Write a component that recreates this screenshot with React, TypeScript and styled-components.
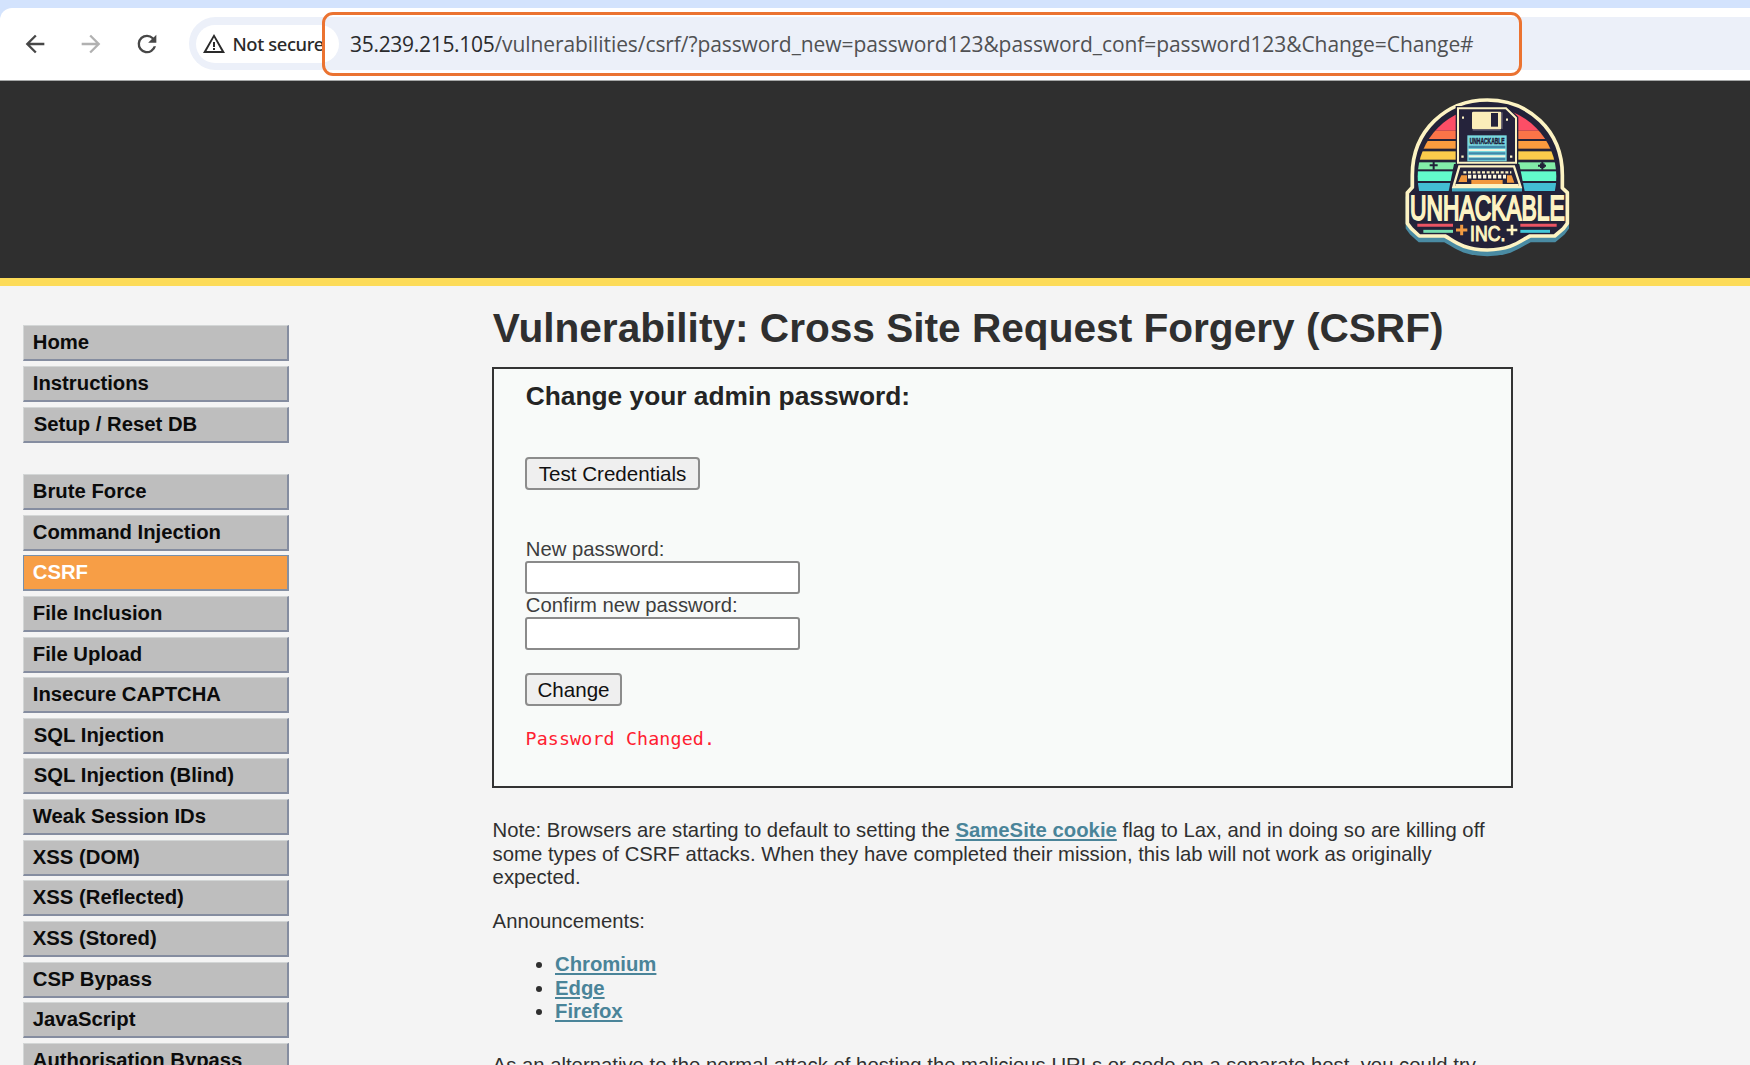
import React from "react";
import styled, { createGlobalStyle } from "styled-components";

const GlobalStyle = createGlobalStyle`
  *, *::before, *::after { box-sizing: border-box; }
  body {
    margin: 0;
    background: #f4f4f4;
    color: #2f2f2f;
    font-family: "Liberation Sans", Arial, sans-serif;
    font-size: 20.3px;
    line-height: 23.5px;
  }
`;

const Window = styled.div`
  width: 1750px;
  height: 1065px;
  overflow: hidden;
  display: flex;
  flex-direction: column;
`;

/* Browser chrome */

const Chrome = styled.div`
  position: relative;
  flex: none;
  height: 81px;
  padding-top: 8px;
  background: #d3e3fd;
`;

const Toolbar = styled.div`
  display: flex;
  align-items: center;
  height: 73px;
  padding-left: 20.5px;
  padding-bottom: 1px;
  background: #fff;
  border-bottom: 1px solid #a6a8a8;
  border-top-left-radius: 12px;
`;

const ToolButton = styled.button<{ $dim?: boolean }>`
  display: flex;
  width: 28px;
  height: 28px;
  margin: 0 28px 0 0;
  padding: 0;
  border: 0;
  background: none;
  color: ${(p) => (p.$dim ? "#b1b1b1" : "#474747")};
`;

const AddressBar = styled.div`
  flex: 1;
  display: flex;
  align-items: center;
  height: 53px;
  padding-left: 7px;
  background: #ecf0f9;
  border-radius: 26.5px 0 0 26.5px;
`;

const SecurityChip = styled.div`
  display: flex;
  align-items: center;
  gap: 6.5px;
  width: 143px;
  height: 38px;
  padding-left: 6.5px;
  border-radius: 19px;
  background: #fff;
  color: #2a2a2a;
  font: 500 18.4px/38px "Noto Sans", "Open Sans", sans-serif;
  letter-spacing: -0.4px;
  white-space: nowrap;
`;

const Url = styled.div`
  margin-left: 11.5px;
  font: 400 21px/38px "Open Sans", "Noto Sans", sans-serif;
  letter-spacing: -0.08px;
  color: #505153;
  white-space: nowrap;
`;

const Host = styled.span`
  color: #2a2b2d;
  letter-spacing: -0.3px;
`;

const Highlight = styled.div`
  position: absolute;
  left: 322px;
  top: 12px;
  width: 1200px;
  height: 64px;
  border: 3px solid #eb7331;
  border-radius: 11px;
`;

/* Page */

const Header = styled.header`
  flex: none;
  display: flex;
  justify-content: flex-end;
  height: 205px;
  padding: 14px 178px 0 0;
  background: #2f2f2f;
  border-bottom: 8px solid #fcdb58;
`;

const Body = styled.div`
  display: flex;
  align-items: flex-start;
`;

const Sidebar = styled.nav`
  flex: none;
  display: flex;
  flex-direction: column;
  gap: 31.2px;
  width: 266px;
  margin: 39.4px 0 0 23px;
`;

const MenuGroup = styled.ul`
  display: flex;
  flex-direction: column;
  gap: 4.67px;
  margin: 0;
  padding: 0;
  list-style: none;
`;

const MenuItem = styled.li<{ $active?: boolean; $shift?: boolean }>`
  height: 36px;
  padding: ${(p) => (p.$shift ? "5px 0 0 9.8px" : "5px 0 0 8.8px")};
  border-style: solid;
  border-width: 1px 2px 2px 1px;
  border-color: ${(p) => (p.$active ? "#7890ab #8590a3 #8590a3 #7890ab" : "#d3d6d6 #858da0 #858da0 #d3d6d6")};
  background: ${(p) => (p.$active ? "#f79e46" : "#bebebe")};
  color: ${(p) => (p.$active ? "#fff" : "#0b0b0b")};
  font-weight: 700;
  white-space: nowrap;
`;

const Content = styled.main`
  width: 1021px;
  margin: 19.2px 0 0 203px;
`;

const Title = styled.h1`
  margin: 0 0 16px;
  padding-left: 0.8px;
  font-size: 40.62px;
  line-height: 46px;
  white-space: nowrap;
`;

const Panel = styled.section`
  height: 421px;
  padding: 11.5px 0 0 31px;
  border: 2px solid #333;
  background: #f8faf9;
`;

const PanelTitle = styled.h3`
  margin: 0 0 46.5px;
  padding-left: 0.8px;
  color: #242424;
  font-size: 26.3px;
  line-height: 30px;
`;

const Button = styled.button<{ $width: number }>`
  display: block;
  width: ${(p) => p.$width}px;
  height: 33px;
  padding: 0;
  border: 2px solid #8c8c8c;
  border-radius: 4px;
  background: #efefef;
  color: #111;
  font: 400 20.6px/28px "Liberation Sans", Arial, sans-serif;
`;

const Fields = styled.div`
  margin: 47.5px 0 23.5px;
`;

const Label = styled.label`
  display: block;
  height: 23px;
  padding-left: 0.8px;
  color: #3d3d3d;
`;

const Input = styled.input`
  display: block;
  width: 275px;
  height: 33px;
  padding: 0 4px;
  border: 2px solid #8a8a8a;
  border-radius: 3px;
  background: #fff;
`;

const Result = styled.pre`
  margin: 21px 0 0;
  padding-left: 0.5px;
  color: #ff2030;
  font: 400 18.3px/24px "DejaVu Sans Mono", monospace;
  letter-spacing: 0.15px;
`;

const Paragraph = styled.p<{ $top: number }>`
  margin: ${(p) => p.$top}px 0 0;
  padding-left: 0.6px;
  letter-spacing: 0.012px;
`;

const Line = styled.span`
  display: block;
  white-space: nowrap;
`;

const Link = styled.a`
  color: #4a8499;
  font-weight: 700;
  text-decoration: underline;
  text-decoration-thickness: 2px;
  text-underline-offset: 2px;
`;

const Announcements = styled.ul`
  margin: 20px 0 0;
  padding-left: 63px;
`;

const topics = ["Home", "Instructions", "Setup / Reset DB"];
const labs = [
  "Brute Force", "Command Injection", "CSRF", "File Inclusion", "File Upload", "Insecure CAPTCHA",
  "SQL Injection", "SQL Injection (Blind)", "Weak Session IDs", "XSS (DOM)", "XSS (Reflected)",
  "XSS (Stored)", "CSP Bypass", "JavaScript", "Authorisation Bypass",
];

function Menu({ items, active }: { items: string[]; active?: string }) {
  return (
    <MenuGroup>
      {items.map((item) => (
        <MenuItem key={item} $active={item === active} $shift={item.startsWith("S")}>{item}</MenuItem>
      ))}
    </MenuGroup>
  );
}

function Icon({ d, size = 28 }: { d: string; size?: number }) {
  return <svg width={size} height={size} viewBox="0 0 24 24" fill="currentColor"><path d={d} /></svg>;
}

const stripes: [number, number, string][] = [
  [80, 72, "#fd4e66"], [152, 25, "#fb7448"], [183, 23, "#fb9b3e"], [214, 25, "#fccb4b"],
  [247, 21, "#82eda9"], [274, 29, "#62fbcb"], [309, 24, "#43bdd3"],
];

function Logo() {
  const badge =
    "M97 322 V285 C97 150 200 60 322 60 C444 60 547 150 547 285 V324 L562 338 V430 L550 446 L524 468 H450 C420 482 400 508 322 510 C244 508 222 482 195 468 H118 L94 446 L82 430 V338 Z";
  return (
    <svg width="168" height="165" viewBox="72 45 504 495">
      <defs>
        <clipPath id="sun"><circle cx="321" cy="290" r="208" /></clipPath>
      </defs>
      <path d={badge} transform="translate(0 14)" fill="#4a8ba3" stroke="#4a8ba3" strokeWidth="10" />
      <path d={badge} fill="#232239" stroke="#fdf3c3" strokeWidth="11" strokeLinejoin="round" />
      <g clipPath="url(#sun)">
        {stripes.map(([y, h, fill]) => <rect key={y} x="100" y={y} width="450" height={h} fill={fill} />)}
      </g>
      <path d="M161 243v26M149 256h24M487 245v24M474 257h24" stroke="#232239" strokeWidth="6" />
      <path d="M480 257h14" stroke="#232239" strokeWidth="14" />

      <path d="M222 252 H418 L434 334 H206 Z" fill="#232239" />
      <path d="M234 85 H378 L408 114 V248 H234 Z" fill="#25233b" stroke="#232239" strokeWidth="14" />
      <path d="M234 85 H378 L408 114 V248 H234 Z" fill="#25233b" stroke="#fdf3c3" strokeWidth="6" />
      <rect x="276" y="95" width="88" height="53" rx="4" fill="#fbedb9" />
      <rect x="333" y="99" width="21" height="41" fill="#25233b" />
      <path d="M366 97v50M278 150h84" stroke="#777083" strokeWidth="3" />
      <path d="M246 113h6M378 119h6M244 230h7M390 230h7" stroke="#fdf3c3" strokeWidth="7" />
      <rect x="262" y="166" width="118" height="78" fill="#79d8df" />
      <path d="M266 201h110M266 220h110M266 237h110" stroke="#4388aa" strokeWidth="7" />
      <path d="M266 210h110M266 229h110" stroke="#f4f4e0" strokeWidth="6" />
      <text x="269" y="192" fontFamily="Liberation Sans, sans-serif" fontSize="26" fontWeight="700" fill="#1e203b" stroke="#1e203b" strokeWidth="1.5" textLength="105" lengthAdjust="spacingAndGlyphs">UNHACKABLE</text>

      <rect x="216" y="322" width="210" height="13" fill="#43a9c2" />
      <path d="M238 259 H402 L422 321 H220 Z" fill="#25233b" stroke="#fdf3c3" strokeWidth="7" />
      <path d="M250 277h144" stroke="#fdf3c3" strokeWidth="7" strokeDasharray="9 5" />
      <path d="M264 290h114" stroke="#fff7dc" strokeWidth="11" strokeDasharray="10 5" />
      <path d="M244 286h17v20h-26zM381 286h14l8 22h-22zM274 300h94v12h-94z" fill="#f1983d" />
      <path d="M226 317h190" stroke="#fdf3c3" strokeWidth="10" />

      <rect x="100" y="335" width="444" height="9" fill="#232239" />
      <text x="90" y="419" fontFamily="Liberation Sans, sans-serif" fontSize="104" fontWeight="400" fill="#fdf3c3" stroke="#fdf3c3" strokeWidth="6" textLength="464" lengthAdjust="spacingAndGlyphs">UNHACKABLE</text>
      <text x="270" y="482" fontFamily="Liberation Sans, sans-serif" fontSize="68" fontWeight="400" fill="#fdf3c3" stroke="#fdf3c3" strokeWidth="3.5" textLength="106" lengthAdjust="spacingAndGlyphs">INC.</text>
      <path d="M112 436h107M421 436h109" stroke="#ec5463" strokeWidth="9" />
      <path d="M130 454h89" stroke="#76dfb1" strokeWidth="9" />
      <path d="M421 454h89" stroke="#42c8d9" strokeWidth="9" />
      <path d="M228 450h34M245 434v32" stroke="#f39b42" strokeWidth="9" />
      <path d="M380 450h32M396 434v32" stroke="#fdf3c3" strokeWidth="8" />
    </svg>
  );
}

export default function App() {
  return (
    <Window>
      <GlobalStyle />
      <Chrome>
        <Toolbar>
          <ToolButton aria-label="Back"><Icon d="M20 11H7.83l5.59-5.59L12 4l-8 8 8 8 1.41-1.41L7.83 13H20v-2z" /></ToolButton>
          <ToolButton aria-label="Forward" $dim><Icon d="M12 4l-1.41 1.41L16.17 11H4v2h12.17l-5.58 5.59L12 20l8-8z" /></ToolButton>
          <ToolButton aria-label="Reload"><Icon d="M17.65 6.35A7.96 7.96 0 0 0 12 4a8 8 0 1 0 7.73 10h-2.08A6 6 0 1 1 12 6c1.66 0 3.14.69 4.22 1.78L13 11h7V4l-2.35 2.35z" /></ToolButton>
          <AddressBar>
            <SecurityChip>
              <Icon size={24} d="M12 5.5 19.53 19H4.47L12 5.5M12 2 1 21h22L12 2zm1 14h-2v2h2v-2zm0-6h-2v5h2v-5z" />
              Not secure
            </SecurityChip>
            <Url><Host>35.239.215.105</Host>/vulnerabilities/csrf/?password_new=password123&amp;password_conf=password123&amp;Change=Change#</Url>
          </AddressBar>
        </Toolbar>
        <Highlight />
      </Chrome>
      <Header><Logo /></Header>
      <Body>
        <Sidebar>
          <Menu items={topics} />
          <Menu items={labs} active="CSRF" />
        </Sidebar>
        <Content>
          <Title>Vulnerability: Cross Site Request Forgery (CSRF)</Title>
          <Panel>
            <PanelTitle>Change your admin password:</PanelTitle>
            <Button $width={175}>Test Credentials</Button>
            <Fields>
              <Label>New password:</Label>
              <Input type="password" />
              <Label>Confirm new password:</Label>
              <Input type="password" />
            </Fields>
            <Button $width={97}>Change</Button>
            <Result>Password Changed.</Result>
          </Panel>
          <Paragraph $top={31}>
            <Line>Note: Browsers are starting to default to setting the <Link>SameSite cookie</Link> flag to Lax, and in doing so are killing off</Line>
            <Line>some types of CSRF attacks. When they have completed their mission, this lab will not work as originally</Line>
            <Line>expected.</Line>
          </Paragraph>
          <Paragraph $top={20}>Announcements:</Paragraph>
          <Announcements>
            <li><Link>Chromium</Link></li>
            <li><Link>Edge</Link></li>
            <li><Link>Firefox</Link></li>
          </Announcements>
          <Paragraph $top={30.5}>
            <Line>As an alternative to the normal attack of hosting the malicious URLs or code on a separate host, you could try</Line>
          </Paragraph>
        </Content>
      </Body>
    </Window>
  );
}
